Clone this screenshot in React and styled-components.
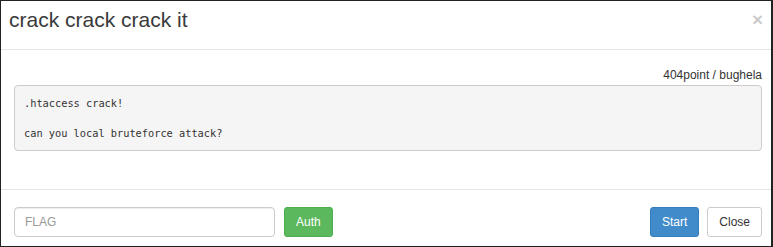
import React from 'react';
import styled, { createGlobalStyle } from 'styled-components';

const Global = createGlobalStyle`
  html, body {
    margin: 0;
    padding: 0;
    background: #fff;
  }
  * { box-sizing: border-box; }
`;

const Modal = styled.div`
  width: 773px;
  height: 247px;
  border: 1px solid #222;
  border-right-width: 2px;
  background: #fff;
  display: flex;
  flex-direction: column;
  font-family: 'Liberation Sans', Arial, sans-serif;
  color: #333;
`;

const Header = styled.div`
  height: 49px;
  flex: none;
  display: flex;
  justify-content: space-between;
  align-items: flex-start;
  padding: 6px 8px 0 8px;
  border-bottom: 1px solid #e5e5e5;
`;

const Title = styled.h4`
  margin: 0;
  font-size: 21px;
  font-weight: 400;
  line-height: 25px;
  color: #3a3a3a;
`;

const CloseX = styled.button`
  border: 0;
  background: transparent;
  padding: 0;
  margin-top: 3px;
  font-family: 'Liberation Sans', Arial, sans-serif;
  font-size: 19px;
  font-weight: 700;
  line-height: 1;
  color: #000;
  opacity: 0.2;
  cursor: pointer;
`;

const Body = styled.div`
  flex: none;
  height: 140px;
  padding: 17px 9px 0 13px;
  border-bottom: 1px solid #e5e5e5;
`;

const Info = styled.div`
  text-align: right;
  font-size: 12px;
  line-height: 17px;
  margin-bottom: 1px;
`;

const Pre = styled.pre`
  margin: 0;
  padding: 10px 9px 9px;
  background: #f5f5f5;
  border: 1px solid #ccc;
  border-radius: 4px;
  font-family: 'DejaVu Sans Mono', 'Liberation Mono', monospace;
  font-size: 10.3px;
  line-height: 15px;
  color: #333;
  white-space: pre-wrap;
`;

const Footer = styled.div`
  flex: 1;
  display: flex;
  align-items: flex-start;
  justify-content: space-between;
  padding: 17px 9px 0 13px;
`;

const Group = styled.div`
  display: flex;
  gap: ${p => p.$gap || 8}px;
`;

const Input = styled.input`
  width: 261px;
  height: 30px;
  padding: 0 10px;
  border: 1px solid #ccc;
  border-radius: 4px;
  font-family: 'Liberation Sans', Arial, sans-serif;
  font-size: 12px;
  color: #555;
  box-shadow: inset 0 1px 1px rgba(0,0,0,0.075);
  outline: none;
  &::placeholder { color: #999; }
`;

const colors = {
  success: { bg: '#5cb85c', border: '#4cae4c', fg: '#fff' },
  primary: { bg: '#428bca', border: '#357ebd', fg: '#fff' },
  default: { bg: '#fff', border: '#ccc', fg: '#333' },
};

const Button = styled.button`
  height: 30px;
  padding: 0 11px;
  border: 1px solid ${p => colors[p.$kind].border};
  background: ${p => colors[p.$kind].bg};
  color: ${p => colors[p.$kind].fg};
  border-radius: 3px;
  font-family: 'Liberation Sans', Arial, sans-serif;
  font-size: 12px;
  line-height: 1;
  cursor: pointer;
`;

export default function App() {
  return (
    <>
      <Global />
      <Modal>
        <Header>
          <Title>crack crack crack it</Title>
          <CloseX>×</CloseX>
        </Header>
        <Body>
          <Info>404point / bughela</Info>
          <Pre>{'.htaccess crack!\n\ncan you local bruteforce attack?'}</Pre>
        </Body>
        <Footer>
          <Group $gap={9}>
            <Input placeholder="FLAG" />
            <Button $kind="success">Auth</Button>
          </Group>
          <Group $gap={8}>
            <Button $kind="primary">Start</Button>
            <Button $kind="default">Close</Button>
          </Group>
        </Footer>
      </Modal>
    </>
  );
}
